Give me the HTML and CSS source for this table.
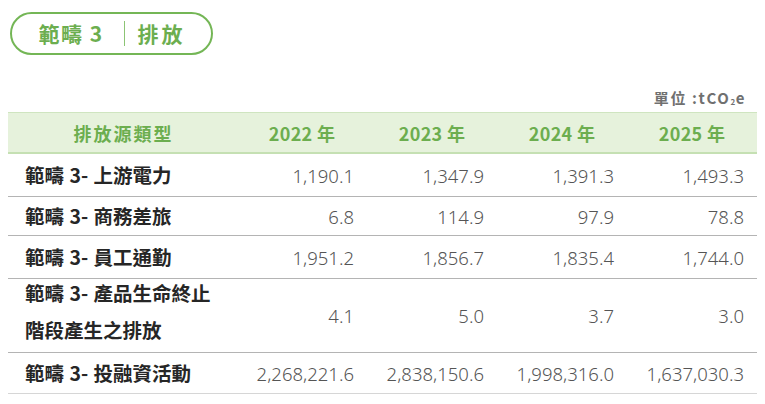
FILE: index.html
```html
<!DOCTYPE html>
<html lang="zh-Hant">
<head>
<meta charset="utf-8">
<link rel="stylesheet" href="styles.css">
</head>
<body>
<div class="page">
  <div class="title-pill">
    <span class="title-a">範疇 3</span>
    <span class="title-sep"></span>
    <span class="title-b">排放</span>
  </div>
  <div class="unit">單位 :tCO<sub>2</sub>e</div>
  <table class="data">
    <colgroup>
      <col class="c-name"><col class="c-num"><col class="c-num"><col class="c-num"><col class="c-num">
    </colgroup>
    <thead>
      <tr>
        <th>排放源類型</th>
        <th>2022 年</th>
        <th>2023 年</th>
        <th>2024 年</th>
        <th>2025 年</th>
      </tr>
    </thead>
    <tbody>
      <tr class="r1">
        <td class="name">範疇 3- 上游電力</td>
        <td>1,190.1</td><td>1,347.9</td><td>1,391.3</td><td>1,493.3</td>
      </tr>
      <tr class="r2">
        <td class="name">範疇 3- 商務差旅</td>
        <td>6.8</td><td>114.9</td><td>97.9</td><td>78.8</td>
      </tr>
      <tr class="r3">
        <td class="name">範疇 3- 員工通勤</td>
        <td>1,951.2</td><td>1,856.7</td><td>1,835.4</td><td>1,744.0</td>
      </tr>
      <tr class="tall">
        <td class="name"><span class="ln">範疇 3- 產品生命終止</span><span class="ln">階段產生之排放</span></td>
        <td>4.1</td><td>5.0</td><td>3.7</td><td>3.0</td>
      </tr>
      <tr class="last">
        <td class="name">範疇 3- 投融資活動</td>
        <td>2,268,221.6</td><td>2,838,150.6</td><td>1,998,316.0</td><td>1,637,030.3</td>
      </tr>
    </tbody>
  </table>
</div>
</body>
</html>
```

FILE: styles.css
```css
html, body {
  margin: 0;
  padding: 0;
  background: #ffffff;
}
.page {
  width: 765px;
  height: 404px;
  padding: 12px 8px 0 8px;
  box-sizing: border-box;
  font-family: "Noto Sans CJK TC", "Noto Sans", sans-serif;
}
.title-pill {
  margin-left: 2px;
  width: 203px;
  height: 43px;
  box-sizing: border-box;
  border: 2px solid #74b656;
  border-radius: 22px;
  display: flex;
  align-items: center;
  justify-content: center;
  color: #6cae4f;
  font-weight: 700;
  font-size: 21px;
  line-height: 1;
  padding-left: 1px;
}
.title-sep {
  display: inline-block;
  width: 0;
  height: 25px;
  border-left: 1.5px solid #8cc474;
  margin: 0 13px 0 20px;
}
.title-a { letter-spacing: 1.5px; }
.title-b { letter-spacing: 3px; }
.unit {
  text-align: right;
  margin-top: 35px;
  padding-right: 11px;
  height: 16px;
  line-height: 16px;
  font-size: 15px;
  font-weight: 700;
  color: #707070;
  letter-spacing: 1.6px;
}
.unit sub {
  font-size: 8px;
  vertical-align: -1px;
  line-height: 0;
  letter-spacing: 0.5px;
}
.data {
  margin-top: 6px;
  width: 749px;
  border-collapse: collapse;
  table-layout: fixed;
}
.c-name { width: 229px; }
.c-num { width: 130px; }
.data thead th {
  background: #e6f2dc;
  border-top: 1.5px solid #cfe5c0;
  border-bottom: 2px solid #c5e0b3;
  height: 39px;
  padding: 0;
  color: #6cae4f;
  font-size: 18px;
  font-weight: 700;
  text-align: center;
  letter-spacing: 0.3px;
}
.data thead th:first-child {
  letter-spacing: 2px;
  padding-left: 2px;
}
.data td {
  padding: 0 13px 0 0;
  height: 40px;
  text-align: right;
  vertical-align: middle;
  font-family: "Noto Sans", sans-serif;
  font-weight: 300;
  font-size: 18.5px;
  color: #555555;
  border-bottom: 1.5px solid #b4b4b4;
}
.data td.name {
  text-align: left;
  padding: 0 0 0 17px;
  font-family: "Noto Sans CJK TC", sans-serif;
  font-weight: 700;
  font-size: 19.5px;
  color: #262626;
  line-height: 26px;
  word-spacing: 1px;
}
.data tr.r1 td { height: 42px; }
.data tr.r2 td { height: 38px; }
.data tr.r3 td { height: 42px; }
.data tr.tall td {
  height: 72px;
}
.data tr.tall td.name {
  vertical-align: middle;
  padding-bottom: 8px;
  height: 65px;
}
.data td.name .ln {
  display: block;
}
.data td.name .ln + .ln {
  margin-top: 11px;
}
.data tr.last td {
  border-bottom: 1.5px solid #d6d6d6;
  height: 40px;
}
```
